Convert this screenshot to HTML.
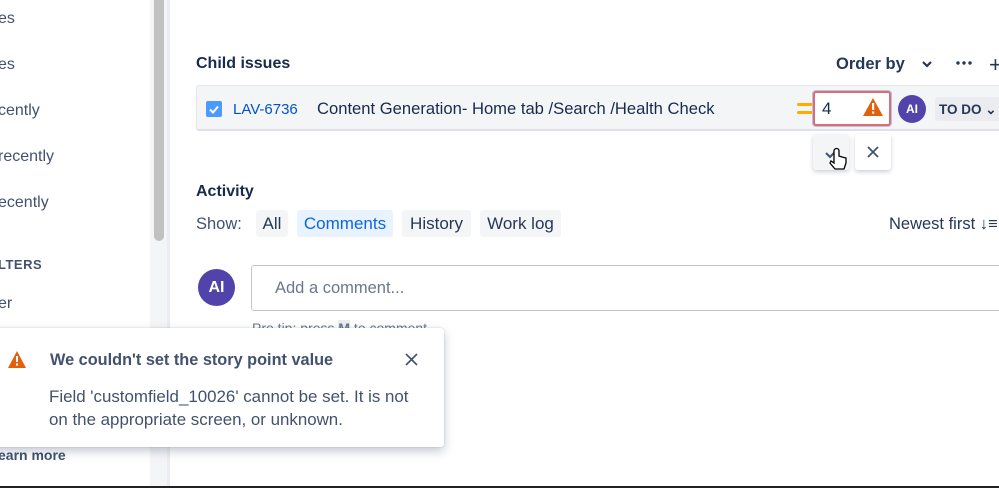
<!DOCTYPE html>
<html><head><style>
*{margin:0;padding:0;box-sizing:border-box}
body{width:999px;height:488px;overflow:hidden;background:#fff;font-family:"Liberation Sans",sans-serif;color:#172b4d;position:relative}
.a{position:absolute;white-space:nowrap}
.side{font-size:16px;color:#42526e}
</style></head><body>
<div class="a side" style="left:-2px;top:10px">es</div>
<div class="a side" style="left:-2px;top:56px">es</div>
<div class="a side" style="left:-2px;top:102px">cently</div>
<div class="a side" style="left:-2px;top:148px">recently</div>
<div class="a side" style="left:-2px;top:194px">ecently</div>
<div class="a" style="left:-2px;top:257px;font-size:13px;font-weight:bold;color:#42526e;letter-spacing:.5px">LTERS</div>
<div class="a side" style="left:-2px;top:295px">er</div>
<div class="a" style="left:-2px;top:447px;font-size:14px;font-weight:bold;color:#42526e">earn more</div>
<div class="a" style="left:150px;top:0;width:17px;height:488px;background:#f4f5f7"></div>
<div class="a" style="left:154px;top:0;width:10px;height:241px;background:#c1c1c1;border-radius:0 0 5px 5px"></div>
<div class="a" style="left:167px;top:0;width:3px;height:488px;background:#ebecf0"></div>

<div class="a" style="left:196px;top:55px;font-size:16px;font-weight:bold">Child issues</div>
<div class="a" style="left:836px;top:55px;font-size:16.5px;font-weight:bold;color:#253858">Order by</div>
<svg class="a" style="left:920px;top:57px" width="14" height="14"><path d="M3 5l4 4 4-4" stroke="#253858" stroke-width="2.2" fill="none"/></svg>
<svg class="a" style="left:955px;top:60px" width="18" height="6"><circle cx="3" cy="3" r="1.7" fill="#253858"/><circle cx="9" cy="3" r="1.7" fill="#253858"/><circle cx="15" cy="3" r="1.7" fill="#253858"/></svg>
<div class="a" style="left:989px;top:52px;font-size:22px;color:#253858">+</div>

<div class="a" style="left:196px;top:85px;width:810px;height:46px;background:#f4f5f7;border:1px solid #e4e6ea;border-bottom:2px solid #dfe1e6;border-radius:3px"></div>
<div class="a" style="left:206px;top:101px;width:16px;height:16px;background:#4c9aff;border-radius:2px"></div>
<svg class="a" style="left:206px;top:101px" width="16" height="16"><path d="M4 8.5l3 3 5-6" stroke="#fff" stroke-width="2" fill="none"/></svg>
<div class="a" style="left:233px;top:101px;font-size:15px;color:#0052cc">LAV-6736</div>
<div class="a" style="left:317px;top:99px;font-size:16.6px">Content Generation- Home tab /Search /Health Check</div>
<div class="a" style="left:797px;top:103px;width:16px;height:3px;background:#ffab00;border-radius:2px"></div>
<div class="a" style="left:797px;top:111px;width:16px;height:3px;background:#ffab00;border-radius:2px"></div>
<div class="a" style="left:813px;top:91px;width:78px;height:35px;background:#fff;border:2px solid #de6e6e;border-radius:3px;box-shadow:0 0 0 1px #b3c4ef"></div>
<div class="a" style="left:822px;top:99px;font-size:17px">4</div>
<svg class="a" style="left:862px;top:97px" width="22" height="20"><path d="M11 1L21 19H1Z" fill="#e5600d"/><rect x="10" y="6" width="2.2" height="7" fill="#fff"/><rect x="10" y="14.5" width="2.2" height="2.2" fill="#fff"/></svg>
<div class="a" style="left:898px;top:95px;width:28px;height:28px;border-radius:50%;background:#5243aa;color:#fff;font-size:12px;font-weight:bold;text-align:center;line-height:28px">AI</div>
<div class="a" style="left:935px;top:97px;width:66px;height:24px;background:#ebecf0;border-radius:3px;font-size:13.5px;font-weight:bold;color:#253858;padding:5px 0 0 4px">TO DO ⌄</div>

<div class="a" style="left:813px;top:134px;width:36px;height:36px;background:#f4f5f7;border-radius:3px;box-shadow:0 2px 4px rgba(9,30,66,.2)"></div>
<div class="a" style="left:855px;top:134px;width:36px;height:36px;background:#fff;border-radius:3px;box-shadow:0 2px 4px rgba(9,30,66,.2)"></div>
<svg class="a" style="left:824px;top:145px" width="26" height="28"><path d="M2 8l4 4 7-7" stroke="#42526e" stroke-width="2" fill="none"/><path d="M10 6v12l-3-2-1 2 5 6h9l2-6v-5l-4-1-3-1V6a1.5 1.5 0 00-5 0z" fill="#fff" stroke="#000" stroke-width="1.3"/></svg>
<svg class="a" style="left:866px;top:145px" width="14" height="14"><path d="M2 2l10 10M12 2L2 12" stroke="#42526e" stroke-width="1.8"/></svg>

<div class="a" style="left:196px;top:183px;font-size:16px;font-weight:bold">Activity</div>
<div class="a" style="left:196px;top:215px;font-size:16.5px;color:#42526e">Show:</div>
<div class="a" style="left:256px;top:210px;width:32px;height:27px;background:#f4f5f7;border-radius:3px;font-size:17px;text-align:center;line-height:28px;color:#253858">All</div>
<div class="a" style="left:297px;top:210px;width:96px;height:27px;background:#e9f2ff;border-radius:3px;font-size:17px;text-align:center;line-height:28px;color:#0c66e4">Comments</div>
<div class="a" style="left:402px;top:210px;width:69px;height:27px;background:#f4f5f7;border-radius:3px;font-size:17px;text-align:center;line-height:28px;color:#253858">History</div>
<div class="a" style="left:480px;top:210px;width:81px;height:27px;background:#f4f5f7;border-radius:3px;font-size:17px;text-align:center;line-height:28px;color:#253858">Work log</div>
<div class="a" style="left:889px;top:215px;font-size:16.5px;color:#253858">Newest first ↓≡</div>

<div class="a" style="left:198px;top:269px;width:37px;height:37px;border-radius:50%;background:#5243aa;color:#fff;font-size:16px;font-weight:bold;text-align:center;line-height:37px">AI</div>
<div class="a" style="left:251px;top:265px;width:760px;height:46px;border:1px solid #c1c7d0;border-radius:3px"></div>
<div class="a" style="left:275px;top:279px;font-size:16.5px;color:#6b778c">Add a comment...</div>
<div class="a" style="left:252px;top:320px;font-size:14px;color:#6b778c">Pro tip: press <b style="background:#ebecf0">M</b> to comment</div>

<div class="a" style="left:-10px;top:328px;width:454px;height:119px;background:#fff;border-radius:3px;box-shadow:0 4px 10px rgba(9,30,66,.25),0 0 1px rgba(9,30,66,.3)"></div>
<svg class="a" style="left:7px;top:350px" width="20" height="19"><path d="M10 1L19 18H1Z" fill="#e5600d"/><rect x="9" y="6" width="2" height="6" fill="#fff"/><rect x="9" y="13.5" width="2" height="2" fill="#fff"/></svg>
<div class="a" style="left:50px;top:351px;font-size:16.3px;font-weight:bold;color:#42526e">We couldn't set the story point value</div>
<svg class="a" style="left:405px;top:353px" width="13" height="13"><path d="M1 1l11 11M12 1L1 12" stroke="#42526e" stroke-width="1.6"/></svg>
<div class="a" style="left:49px;top:385px;font-size:16.9px;color:#42526e;line-height:23px">Field 'customfield_10026' cannot be set. It is not<br>on the appropriate screen, or unknown.</div>
<div class="a" style="left:0;top:486px;width:999px;height:2px;background:#222"></div>
</body></html>
